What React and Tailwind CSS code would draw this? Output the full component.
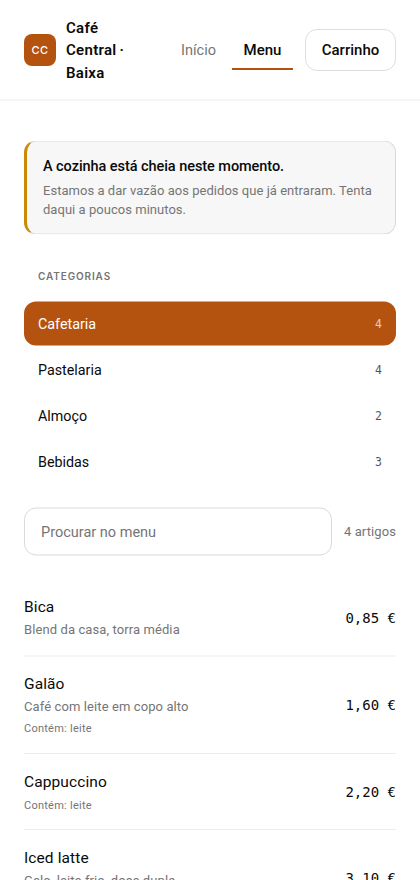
import React, { useState } from "react";

const categories = [
  { id: "cafetaria", name: "Cafetaria", count: 4 },
  { id: "pastelaria", name: "Pastelaria", count: 4 },
  { id: "almoco", name: "Almoço", count: 2 },
  { id: "bebidas", name: "Bebidas", count: 3 },
];

const items = [
  { id: 1, name: "Bica", description: "Blend da casa, torra média", price: "0,85 €" },
  { id: 2, name: "Galão", description: "Café com leite em copo alto", allergens: "leite", price: "1,60 €" },
  { id: 3, name: "Cappuccino", allergens: "leite", price: "2,20 €" },
  { id: 4, name: "Iced latte", description: "Gelo, leite frio, dose dupla", allergens: "leite", price: "3,10 €" },
];

const Header = () => (
  <header className="flex h-[101px] items-center border-b-2 border-[#f5f5f5] px-6 pt-px">
    <div className="flex flex-1 items-center gap-2.5">
      <div className="flex size-8 shrink-0 items-center justify-center rounded-lg bg-[#b45210] font-['Inter',sans-serif] text-[11px] font-medium tracking-[0.04em] text-white">
        CC
      </div>
      <div className="pt-px text-[15px] leading-[22.5px] font-semibold">
        <span className="tracking-[0.02em]">Café</span>
        <br />
        <span className="tracking-[0.02em]">Central</span>
        <span className="ml-[3px]">·</span>
        <br />
        <span className="tracking-[0.02em]">Baixa</span>
      </div>
    </div>
    <nav className="flex gap-1">
      <a className="flex h-10 w-[59px] items-center justify-center pt-0.5 text-[14.5px] text-[#757575]">Início</a>
      <a className="flex h-10 w-[61px] items-center justify-center border-y-2 border-t-transparent border-b-[#b45210] text-[15px] font-medium">
        Menu
      </a>
    </nav>
    <button className="ml-3 h-[42px] w-[91px] rounded-xl border border-[#dedede] text-[15px] font-medium">
      Carrinho
    </button>
  </header>
);

const Notice = () => (
  <div className="translate-y-[0.5px] rounded-xl border border-l-3 border-[#dadada] border-l-[#ca8a04] bg-[#f7f7f7] px-4 py-3.5">
    <p className="text-[14.5px] leading-[22.5px] font-medium tracking-[-0.06px]">
      A cozinha está cheia neste momento.
    </p>
    <p className="mt-0.5 text-[13px] leading-[19.5px] tracking-[0.035px] whitespace-nowrap text-[#757575]">
      Estamos a dar vazão aos pedidos que já entraram. Tenta
      <br />
      daqui a poucos minutos.
    </p>
  </div>
);

const MenuItem = ({ item }) => (
  <li className="flex items-center justify-between border-b border-[#ececec] pt-[17px] pb-[15px] first:mb-[0.5px] first:h-[77px] first:translate-y-[0.5px] first:py-4 nth-2:pt-[16.5px] nth-2:pb-[15.5px]">
    <div>
      <h3 className="text-[15.5px] leading-[22.5px] tracking-[0.1px]">{item.name}</h3>
      {item.description && (
        <p className="mt-[1.5px] mb-[0.5px] text-[13px] leading-[19.5px] tracking-[0.1px] text-[#757575]">
          {item.description}
        </p>
      )}
      {item.allergens && (
        <p className="mt-[4.75px] mb-[-0.75px] text-[11px] leading-[16.5px] tracking-[0.25px] text-[#757575]">
          Contém: {item.allergens}
        </p>
      )}
    </div>
    <span className="font-['DejaVu_Sans_Mono',monospace] text-[14px]">{item.price}</span>
  </li>
);

const App = () => {
  const [active, setActive] = useState("cafetaria");
  const [query, setQuery] = useState("");

  return (
    <div className="h-[880px] overflow-hidden bg-white font-['Roboto',sans-serif] text-[#0a0a0a]">
      <Header />
      <main className="px-6 pt-[39px]">
        <Notice />

        <h2 className="mt-[32.5px] px-3.5 font-['Inter',sans-serif] text-[10px] leading-5 font-semibold tracking-[0.87px] text-[#757575]">
          CATEGORIAS
        </h2>
        <div className="mt-[15px] flex translate-y-[0.5px] flex-col gap-0.5">
          {categories.map((cat) => (
            <button
              key={cat.id}
              onClick={() => setActive(cat.id)}
              className={`flex h-11 items-center justify-between rounded-xl px-3.5 pt-0.5 text-[14.3px] ${
                active === cat.id ? "bg-[#b45210] text-white" : ""
              }`}
            >
              <span>{cat.name}</span>
              <span className="font-['DejaVu_Sans_Mono',monospace] text-[11.5px] opacity-70">{cat.count}</span>
            </button>
          ))}
        </div>

        <div className="mt-6 flex translate-y-[0.5px] items-center gap-3">
          <input
            className="h-12 w-[308px] rounded-xl border border-[#dadada] px-4 text-[14.5px] outline-none placeholder:text-[#757575]"
            placeholder="Procurar no menu"
            value={query}
            onChange={(e) => setQuery(e.target.value)}
          />
          <span className="text-[13px] tracking-[0.1px] whitespace-nowrap text-[#757575]">4 artigos</span>
        </div>

        <ul className="mt-6">
          {items.map((item) => (
            <MenuItem key={item.id} item={item} />
          ))}
        </ul>
      </main>
    </div>
  );
};

export default App;
